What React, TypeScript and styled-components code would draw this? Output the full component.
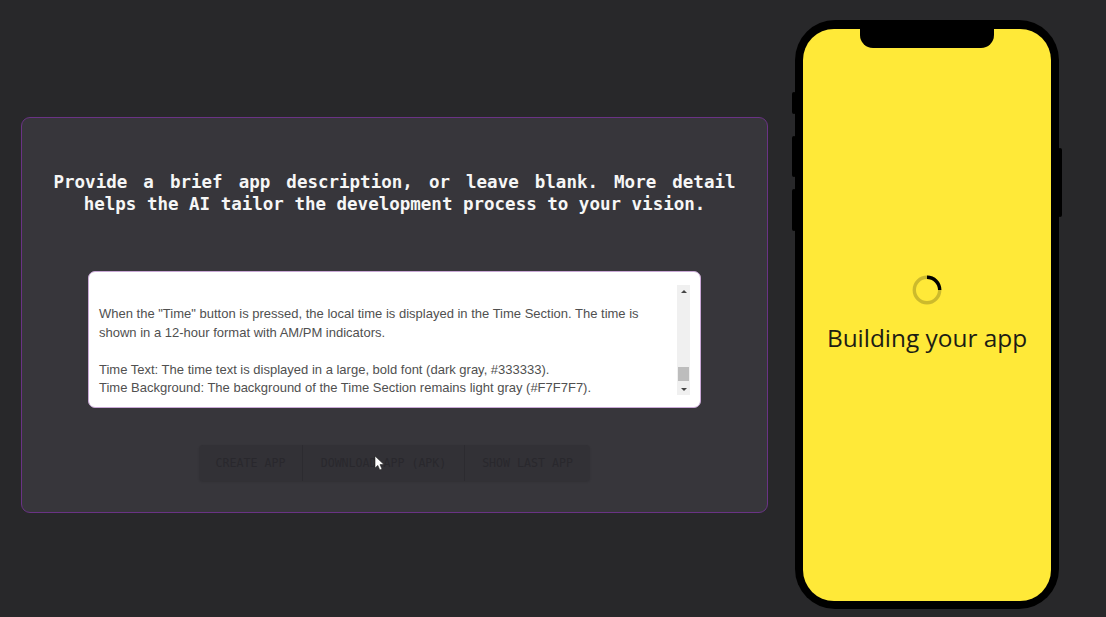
import styled, { createGlobalStyle } from "styled-components";

const GlobalStyle = createGlobalStyle`
  html, body {
    margin: 0;
    padding: 0;
    background: #28282a;
  }
`;

const Page = styled.div`
  position: relative;
  width: 1106px;
  height: 617px;
  overflow: hidden;
  display: flex;
  align-items: center;
  padding: 12px 0 0 21px;
  gap: 27px;
  box-sizing: border-box;
  background: #28282a;
`;

const Card = styled.div`
  width: 747px;
  height: 396px;
  margin-top: 1px;
  box-sizing: border-box;
  padding-top: 53px;
  background: #37363b;
  border: 1px solid #6a3385;
  border-radius: 9px;
  display: flex;
  flex-direction: column;
  align-items: center;
`;

const Heading = styled.h1`
  width: 682px;
  margin: 0;
  font: 700 17.5px/22px "DejaVu Sans Mono", monospace;
  color: #f6f6f6;
  text-align: justify;
  text-align-last: center;

  span {
    display: block;
    text-align-last: justify;
  }
`;

const DescriptionBox = styled.div`
  width: 613px;
  height: 137px;
  margin-top: 56px;
  box-sizing: border-box;
  padding: 13px 10px 0 10px;
  display: flex;
  align-items: flex-start;
  background: #fff;
  border: 1px solid #c9a8d6;
  border-radius: 7px;
  overflow: hidden;
`;

const DescriptionText = styled.div`
  flex: 1;
  padding: 20px 30px 0 0;
  font: 400 13px/18.5px "Liberation Sans", Arial, sans-serif;
  color: #505050;
  white-space: pre-line;
`;

const ScrollTrack = styled.div`
  width: 13px;
  height: 110px;
  box-sizing: border-box;
  padding: 5px 1px 4px;
  display: flex;
  flex-direction: column;
  align-items: center;
  background: #f0f0f0;
`;

const ScrollArrow = styled.div<{ $down?: boolean }>`
  width: 0;
  height: 0;
  border-left: 3px solid transparent;
  border-right: 3px solid transparent;
  ${(p) =>
    p.$down ? "border-top: 3px solid #444;" : "border-bottom: 3px solid #444;"}
`;

const ScrollThumb = styled.div`
  width: 11px;
  height: 14px;
  margin: auto 0 7px;
  background: #bdbdbd;
`;

const ButtonGroup = styled.div`
  margin-top: 37px;
  display: flex;
  height: 36px;
  border-radius: 4px;
  overflow: hidden;
  box-shadow: 0 1px 2px rgba(0, 0, 0, 0.12);
`;

const GroupButton = styled.button<{ $w: number }>`
  width: ${(p) => p.$w}px;
  height: 100%;
  padding: 0;
  border: 0;
  border-right: 1px solid #2c2b30;
  background: #323136;
  color: #29282d;
  font: 400 11.6px "DejaVu Sans Mono", monospace;
  text-transform: uppercase;

  &:last-child {
    border-right: 0;
  }
`;

const Phone = styled.div`
  position: relative;
  width: 264px;
  height: 589px;
  box-sizing: border-box;
  padding: 9px 8px 8px 8px;
  background: #000;
  border-radius: 40px;
`;

const SideRail = styled.div<{ $right?: boolean }>`
  position: absolute;
  top: ${(p) => (p.$right ? 128 : 72)}px;
  ${(p) => (p.$right ? "right: -3px;" : "left: -3px;")}
  display: flex;
  flex-direction: column;
  gap: 12px;
`;

const SideButton = styled.div<{ $h: number; $after?: number }>`
  width: 4px;
  height: ${(p) => p.$h}px;
  margin-bottom: ${(p) => p.$after ?? 0}px;
  background: #000;
  border-radius: 2px;
`;

const Screen = styled.div`
  position: relative;
  height: 100%;
  background: #ffe938;
  border-radius: 31px;
  display: flex;
  flex-direction: column;
  align-items: center;
  justify-content: center;
  gap: 16px;
`;

const Notch = styled.div`
  position: absolute;
  top: 0;
  left: 57px;
  width: 134px;
  height: 19px;
  background: #000;
  border-radius: 0 0 13px 13px;
`;

const Spinner = styled.svg`
  width: 30px;
  height: 30px;
  display: block;
`;

const BuildingText = styled.div`
  font: 400 24.4px/34px "Open Sans", sans-serif;
  color: #1c1c14;
`;

const Cursor = styled.svg`
  position: absolute;
  left: 374px;
  top: 455px;
  width: 11px;
  height: 16px;
`;

const App = () => {
  return (
    <>
      <GlobalStyle />
      <Page>
        <Card>
          <Heading>
            <span>Provide a brief app description, or leave blank. More detail</span>
            helps the AI tailor the development process to your vision.
          </Heading>
          <DescriptionBox>
            <DescriptionText>
              {`When the "Time" button is pressed, the local time is displayed in the Time Section. The time is shown in a 12-hour format with AM/PM indicators.

Time Text: The time text is displayed in a large, bold font (dark gray, #333333).
Time Background: The background of the Time Section remains light gray (#F7F7F7).`}
            </DescriptionText>
            <ScrollTrack>
              <ScrollArrow />
              <ScrollThumb />
              <ScrollArrow $down />
            </ScrollTrack>
          </DescriptionBox>
          <ButtonGroup>
            <GroupButton $w={104}>Create App</GroupButton>
            <GroupButton $w={162}>Download App (APK)</GroupButton>
            <GroupButton $w={125}>Show Last App</GroupButton>
          </ButtonGroup>
        </Card>
        <Phone>
          <SideRail>
            <SideButton $h={22} $after={10} />
            <SideButton $h={41} />
            <SideButton $h={42} />
          </SideRail>
          <SideRail $right>
            <SideButton $h={69} />
          </SideRail>
          <Screen>
            <Notch />
            <Spinner viewBox="0 0 30 30">
              <circle cx="15" cy="15" r="12.7" fill="none" stroke="#000" strokeOpacity="0.2" strokeWidth="3.4" />
              <path d="M15 2.3 A12.7 12.7 0 0 1 27.7 15" fill="none" stroke="#000" strokeWidth="3.4" />
            </Spinner>
            <BuildingText>Building your app</BuildingText>
          </Screen>
        </Phone>
        <Cursor viewBox="0 0 11 16">
          <path d="M1 1 V13 L3.8 10.4 L5.8 15 L8 14 L6 9.6 H10 Z" fill="#fff" stroke="#222" strokeWidth="0.6" />
        </Cursor>
      </Page>
    </>
  );
};

export default App;
